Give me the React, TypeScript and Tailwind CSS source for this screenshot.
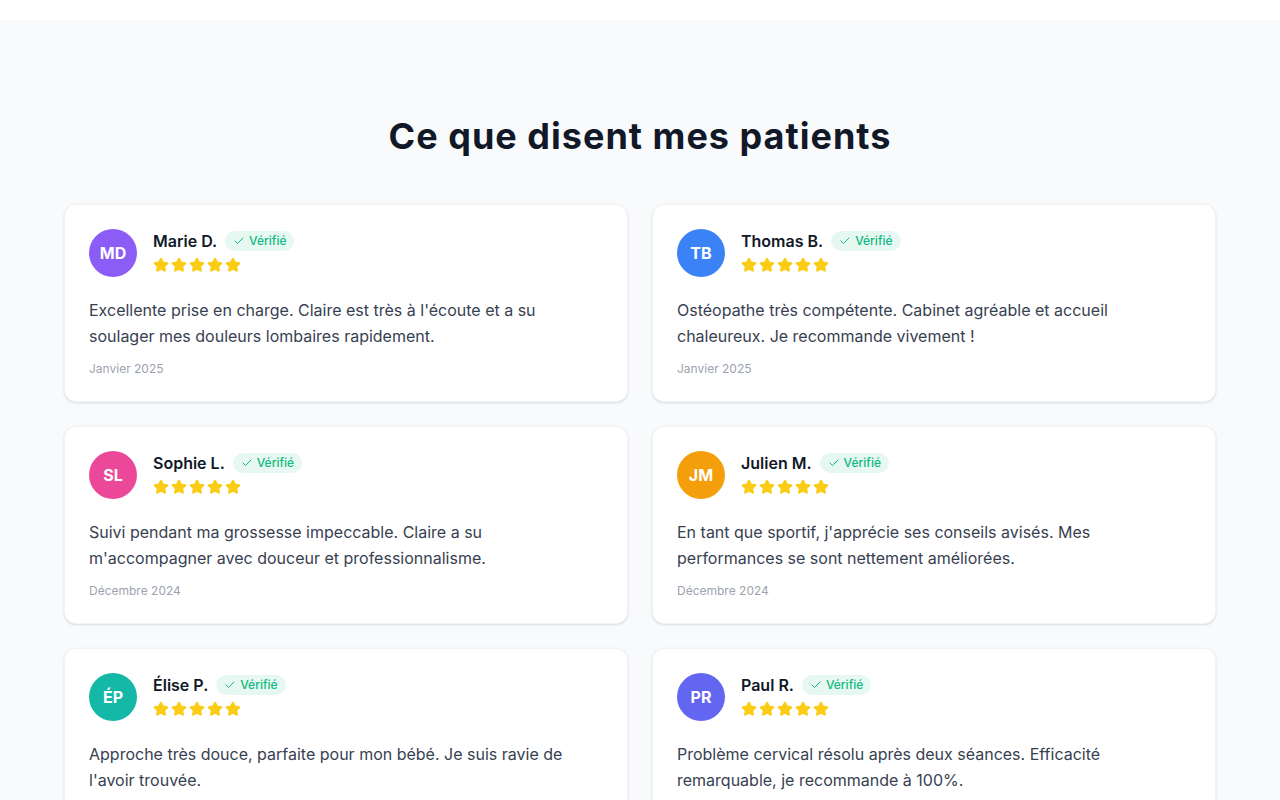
import { Check, Star } from 'lucide-react'

const REVIEWS = [
  {
    initials: 'MD',
    name: 'Marie D.',
    color: 'bg-[#8b5cf6]',
    text: "Excellente prise en charge. Claire est très à l'écoute et a su soulager mes douleurs lombaires rapidement.",
    date: 'Janvier 2025',
  },
  {
    initials: 'TB',
    name: 'Thomas B.',
    color: 'bg-[#3b82f6]',
    text: 'Ostéopathe très compétente. Cabinet agréable et accueil chaleureux. Je recommande vivement !',
    date: 'Janvier 2025',
  },
  {
    initials: 'SL',
    name: 'Sophie L.',
    color: 'bg-[#ec4899]',
    text: "Suivi pendant ma grossesse impeccable. Claire a su m'accompagner avec douceur et professionnalisme.",
    date: 'Décembre 2024',
  },
  {
    initials: 'JM',
    name: 'Julien M.',
    color: 'bg-[#f59e0b]',
    text: "En tant que sportif, j'apprécie ses conseils avisés. Mes performances se sont nettement améliorées.",
    date: 'Décembre 2024',
  },
  {
    initials: 'ÉP',
    name: 'Élise P.',
    color: 'bg-[#14b8a6]',
    text: "Approche très douce, parfaite pour mon bébé. Je suis ravie de l'avoir trouvée.",
    date: 'Novembre 2024',
  },
  {
    initials: 'PR',
    name: 'Paul R.',
    color: 'bg-[#6366f1]',
    text: 'Problème cervical résolu après deux séances. Efficacité remarquable, je recommande à 100%.',
    date: 'Novembre 2024',
  },
]

function ReviewCard({ r }: { r: (typeof REVIEWS)[number] }) {
  return (
    <div className="bg-white border border-[#f3f4f6] rounded-xl shadow-sm p-6">
      <div className="flex items-start gap-4">
        <div
          className={`${r.color} w-12 h-12 rounded-full flex items-center justify-center text-white font-bold text-base shrink-0`}
        >
          {r.initials}
        </div>
        <div>
          <div className="flex items-center gap-2">
            <span className="text-base font-semibold text-[#111827]">{r.name}</span>
            <span className="inline-flex items-center gap-1 bg-[#e7f8f2] text-[#10b981] text-xs font-medium rounded-full px-2 py-0.5">
              <Check className="w-3 h-3" strokeWidth={2} />
              Vérifié
            </span>
          </div>
          <div className="flex gap-0.5 mt-1">
            {[0, 1, 2, 3, 4].map((i) => (
              <Star key={i} className="w-4 h-4 fill-[#facc15] text-[#facc15]" />
            ))}
          </div>
        </div>
      </div>
      <p className="mt-5 text-base leading-relaxed text-[#374151]">{r.text}</p>
      <p className="mt-3 text-xs text-[#9ca3af]">{r.date}</p>
    </div>
  )
}

export default function App() {
  return (
    <div className="min-h-screen bg-white font-['Inter',sans-serif]">
      <div className="h-5 bg-white" />
      <section className="bg-[#f9fafb] py-24">
        <div className="max-w-6xl mx-auto">
          <h2 className="text-4xl font-bold text-[#111827] text-center mb-12 tracking-[0.028em]">
            Ce que disent mes patients
          </h2>
          <div className="grid grid-cols-2 gap-6">
            {REVIEWS.map((r) => (
              <ReviewCard key={r.name} r={r} />
            ))}
          </div>
        </div>
      </section>
    </div>
  )
}
